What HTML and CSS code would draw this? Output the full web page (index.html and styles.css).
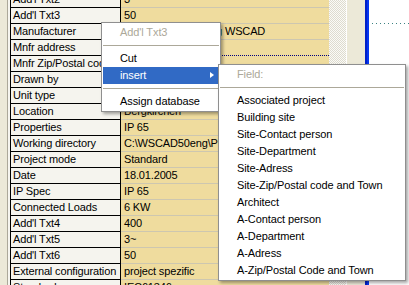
FILE: index.html
```html
<!DOCTYPE html>
<html lang="en">
<head>
    <meta charset="utf-8">
    <title>Project properties</title>
    <link rel="stylesheet" href="styles.css">
</head>
<body>

<div class="app">
    <div class="gutter"></div>
    <div class="grid">
        <div class="name">Add'l Txt2</div><div class="val">3</div>
        <div class="name">Add'l Txt3</div><div class="val">50</div>
        <div class="name">Manufacturer</div><div class="val">Softwareentwicklung WSCAD</div>
        <div class="name">Mnfr address</div><div class="val"></div>
        <div class="name">Mnfr Zip/Postal code</div><div class="val focus"></div>
        <div class="name">Drawn by</div><div class="val"></div>
        <div class="name">Unit type</div><div class="val"></div>
        <div class="name">Location</div><div class="val">Bergkirchen</div>
        <div class="name">Properties</div><div class="val">IP 65</div>
        <div class="name">Working directory</div><div class="val">C:\WSCAD50eng\Projects</div>
        <div class="name">Project mode</div><div class="val">Standard</div>
        <div class="name">Date</div><div class="val">18.01.2005</div>
        <div class="name">IP Spec</div><div class="val">IP 65</div>
        <div class="name">Connected Loads</div><div class="val">6 KW</div>
        <div class="name">Add'l Txt4</div><div class="val">400</div>
        <div class="name">Add'l Txt5</div><div class="val">3~</div>
        <div class="name">Add'l Txt6</div><div class="val">50</div>
        <div class="name">External configuration</div><div class="val">project spezific</div>
        <div class="name">Standard</div><div class="val">IEC61346</div>
    </div>
    <div class="hatch"></div>
    <div class="panel"></div>
    <div class="edge"></div>
    <div class="canvas">
        <div class="dots"></div>
    </div>
</div>

<div class="menu main-menu">
    <div class="item disabled">Add'l Txt3</div>
    <div class="sep"></div>
    <div class="item">Cut</div>
    <div class="item active">insert<span class="arrow"></span></div>
    <div class="sep"></div>
    <div class="item">Assign database</div>
</div>

<div class="menu sub-menu">
    <div class="item disabled">Field:</div>
    <div class="sep"></div>
    <div class="item">Associated project</div>
    <div class="item">Building site</div>
    <div class="item">Site-Contact person</div>
    <div class="item">Site-Department</div>
    <div class="item">Site-Adress</div>
    <div class="item">Site-Zip/Postal code and Town</div>
    <div class="item">Architect</div>
    <div class="item">A-Contact person</div>
    <div class="item">A-Department</div>
    <div class="item">A-Adress</div>
    <div class="item">A-Zip/Postal Code and Town</div>
</div>

</body>
</html>
```

FILE: styles.css
```css
body {
    margin: 0;
    padding: 0;
    width: 409px;
    height: 285px;
    overflow: hidden;
    position: relative;
    font-family: "Liberation Sans", Arial, sans-serif;
    font-size: 11px;
    color: #000;
    background: #fff;
}
.app {
    display: flex;
    height: 285px;
    overflow: hidden;
}
.gutter {
    width: 10px;
    flex: none;
    background: linear-gradient(to right, #ece9d8 0 7px, #aca899 7px 8px, #f6f5ef 8px 10px);
}
.grid {
    width: 318px;
    flex: none;
    margin-top: -9px;
    display: grid;
    grid-template-columns: 110px 1fr;
    grid-auto-rows: 16px;
    border-left: 1px solid #000;
    align-content: start;
}
.name,
.val {
    box-sizing: border-box;
    height: 16px;
    line-height: 15px;
    white-space: nowrap;
    overflow: hidden;
    letter-spacing: -0.15px;
}
.name {
    padding-left: 2px;
    background: #f5f4ee;
    border-top: 1px solid #000;
    border-right: 1px solid #000;
}
.val {
    padding-left: 3px;
    background: #efdc9e;
    border-top: 1px solid #cdc7b0;
}
.val.focus {
    border-top: 1px dotted #000080;
}
.hatch {
    width: 17px;
    flex: none;
    background: repeating-conic-gradient(#dedbcf 0 25%, #fbfbf7 0 50%) 0 0 / 2px 2px;
}
.panel {
    width: 18px;
    flex: none;
    background: #ece9d8;
    border-left: 1px solid #fff;
}
.edge {
    width: 4px;
    flex: none;
    background: linear-gradient(to right, #0020c8 0 2px, #0536f0 2px 4px);
}
.canvas {
    flex: 1;
    background: #fff;
}
.dots {
    height: 1px;
    margin: 23px 0 0 3px;
    background: repeating-linear-gradient(to right, #3c8282 0 1px, transparent 1px 4px);
}

/* popup menus */
.menu {
    position: absolute;
    box-sizing: border-box;
    background: #fff;
    border: 1px solid #8f8f8f;
    padding: 1px;
    box-shadow: 2px 2px 3px rgba(0, 0, 0, 0.35);
    letter-spacing: -0.1px;
}
.main-menu {
    left: 101px;
    top: 22px;
    width: 120px;
}
.sub-menu {
    left: 218px;
    top: 64px;
    width: 188px;
}
.item {
    position: relative;
    height: 17px;
    line-height: 17px;
    padding-left: 17px;
    white-space: nowrap;
}
.item.disabled {
    color: #aca899;
}
.item.active {
    background: #316ac5;
    color: #fff;
}
.arrow {
    position: absolute;
    left: 107px;
    top: 5px;
    width: 0;
    height: 0;
    border-left: 4px solid #fff;
    border-top: 3.5px solid transparent;
    border-bottom: 3.5px solid transparent;
}
.sep {
    height: 1px;
    margin: 4px 0;
    background: #aca899;
}
```
